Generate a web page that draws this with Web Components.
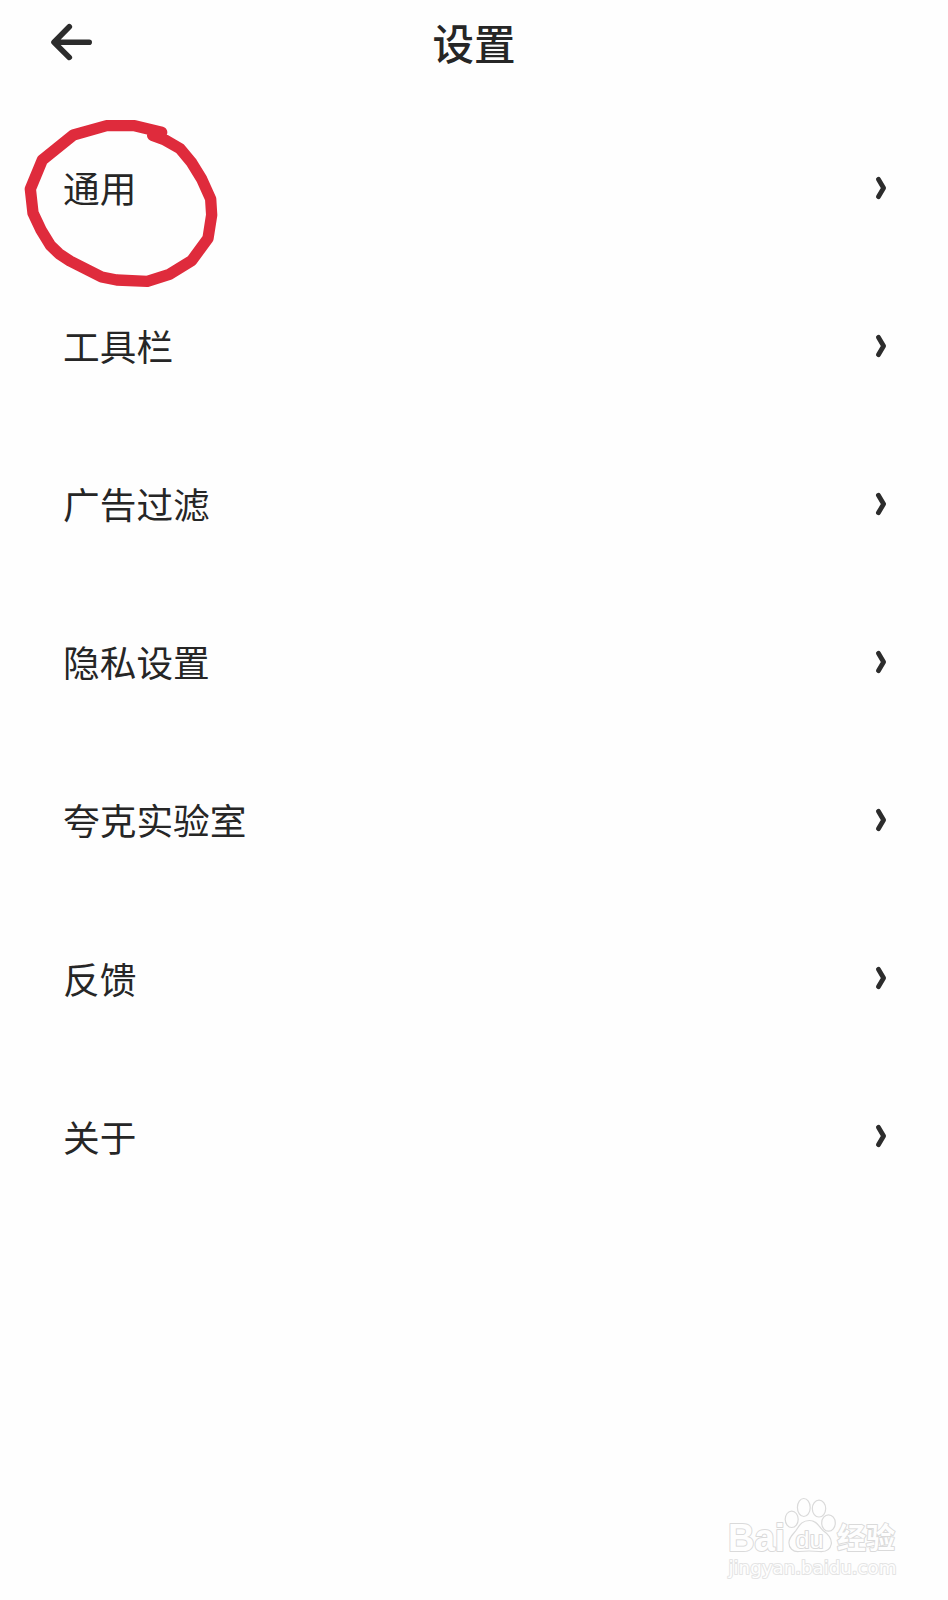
<!DOCTYPE html>
<html lang="zh-CN">
<head>
<meta charset="utf-8">
<title>设置</title>
<style>
body {
  margin: 0;
  background: #fefefe;
  color: #262626;
  font-family: "Noto Sans CJK SC", sans-serif;
}
</style>
</head>
<body>
<settings-page>
  <settings-header slot="header">设置</settings-header>
  <settings-row>通用</settings-row>
  <settings-row>工具栏</settings-row>
  <settings-row>广告过滤</settings-row>
  <settings-row>隐私设置</settings-row>
  <settings-row>夸克实验室</settings-row>
  <settings-row>反馈</settings-row>
  <settings-row>关于</settings-row>
  <red-circle slot="overlay"></red-circle>
  <site-watermark slot="overlay"></site-watermark>
</settings-page>

<script>
class SettingsPage extends HTMLElement {
  constructor() {
    super();
    this.attachShadow({ mode: 'open' });

    this.shadowRoot.innerHTML = `
    <style>
    :host {
      display: flex;
      flex-direction: column;
      position: relative;
      height: 1600px;
      overflow: hidden;
    }

    .rows {
      display: flex;
      flex-direction: column;
    }
    </style>

    <slot name="header"></slot>
    <div class="rows"><slot></slot></div>
    <slot name="overlay"></slot>
    `;
  }
}

class SettingsHeader extends HTMLElement {
  constructor() {
    super();
    this.attachShadow({ mode: 'open' });

    this.shadowRoot.innerHTML = `
    <style>
    :host {
      display: grid;
      grid-template-columns: 100px 1fr 100px;
      height: 84px;
      margin-bottom: 24.6px;
      align-items: center;
      text-align: center;
      font-size: 41.5px;
      font-weight: 500;
      line-height: 84px;
    }

    svg {
      display: block;
      padding-left: 48px;
    }
    </style>

    <svg width="48" height="84" viewBox="48 0 48 84" fill="none" stroke="#2c2c2c" stroke-width="5.6" stroke-linecap="round" stroke-linejoin="round">
      <path d="M69.3 26.8 L54 42.3 L69.3 57.4 M54.5 42.3 H89.2"/>
    </svg>
    <span><slot></slot></span>
    `;
  }
}

class SettingsRow extends HTMLElement {
  constructor() {
    super();
    this.attachShadow({ mode: 'open' });

    this.shadowRoot.innerHTML = `
    <style>
    :host {
      display: flex;
      align-items: center;
      justify-content: space-between;
      box-sizing: border-box;
      height: 158.1px;
      padding: 0 60px 0 63px;
      font-size: 36.7px;
      line-height: 50px;
    }

    span {
      padding-bottom: 1.2px;
    }

    svg {
      display: block;
    }
    </style>

    <span><slot></slot></span>
    <svg width="14" height="26" viewBox="0 0 14 26" fill="none" stroke="#2c2c2c" stroke-width="4.8" stroke-linecap="round" stroke-linejoin="round">
      <path d="M4.4 4.2 L9.6 13 L4.4 21.8"/>
    </svg>
    `;
  }
}

class RedCircle extends HTMLElement {
  constructor() {
    super();
    this.attachShadow({ mode: 'open' });

    this.shadowRoot.innerHTML = `
    <style>
    :host {
      display: block;
      position: absolute;
      left: 10px;
      top: 105px;
    }

    svg {
      display: block;
    }
    </style>

    <svg width="220" height="195" viewBox="0 0 660 585" fill="none" stroke="#df2b3c" stroke-width="34" stroke-linecap="round" stroke-linejoin="round">
      <path d="M455 82 L374 62 L290 62 L190 90 L97 165 L61 252 L69 324 L93 375 L122 422 L147 446 L180 468 L275 516 L320 525 L412 529 L478 508 L545 467 L594 400 L605 330 L602 282 L575 222 L545 173 L510 131 L465 105 L428 91 L455 82"/>
    </svg>
    `;
  }
}

class SiteWatermark extends HTMLElement {
  constructor() {
    super();
    this.attachShadow({ mode: 'open' });

    this.shadowRoot.innerHTML = `
    <style>
    :host {
      display: block;
      position: absolute;
      left: 710px;
      top: 1480px;
    }

    svg {
      display: block;
    }

    text {
      font-family: "Liberation Sans", "Noto Sans CJK SC", sans-serif;
      paint-order: stroke;
    }

    .url {
      font-family: "DejaVu Sans", sans-serif;
      stroke: #e4e4e4;
    }
    </style>

    <svg width="210" height="120" viewBox="0 0 210 120" fill="#fefefe" stroke="#dadada" stroke-width="1.2" stroke-linejoin="round">
      <ellipse cx="81.7" cy="39.3" rx="6.5" ry="8.2"/>
      <ellipse cx="93.8" cy="27.5" rx="6.4" ry="9"/>
      <ellipse cx="109" cy="28.6" rx="6.7" ry="8.4"/>
      <ellipse cx="118.5" cy="43" rx="6.8" ry="8.2"/>
      <path d="M99.5 40.5 C107 40.5 109 47 113 50.5 C118 54 122 58 121.3 64 C120 71 114 72 109 71.5 C104 71 94 71 89 71.5 C83 72 78.5 68 79 62 C79.5 56 84 54 87 49 C90 44 93 40.5 99.5 40.5 Z"/>
      <g stroke-width="2">
        <text x="18" y="70.5" font-size="38" font-weight="700" textLength="57" lengthAdjust="spacingAndGlyphs">Bai</text>
        <text x="85.5" y="67.5" font-size="24" textLength="28" lengthAdjust="spacingAndGlyphs">du</text>
        <text x="127" y="68.5" font-size="29" font-weight="700" textLength="58" lengthAdjust="spacingAndGlyphs">经验</text>
        <text class="url" x="18.5" y="93.5" font-size="18" textLength="168" lengthAdjust="spacingAndGlyphs">jingyan.baidu.com</text>
      </g>
    </svg>
    `;
  }
}

window.customElements.define('settings-page', SettingsPage);
window.customElements.define('settings-header', SettingsHeader);
window.customElements.define('settings-row', SettingsRow);
window.customElements.define('red-circle', RedCircle);
window.customElements.define('site-watermark', SiteWatermark);
</script>
</body>
</html>
